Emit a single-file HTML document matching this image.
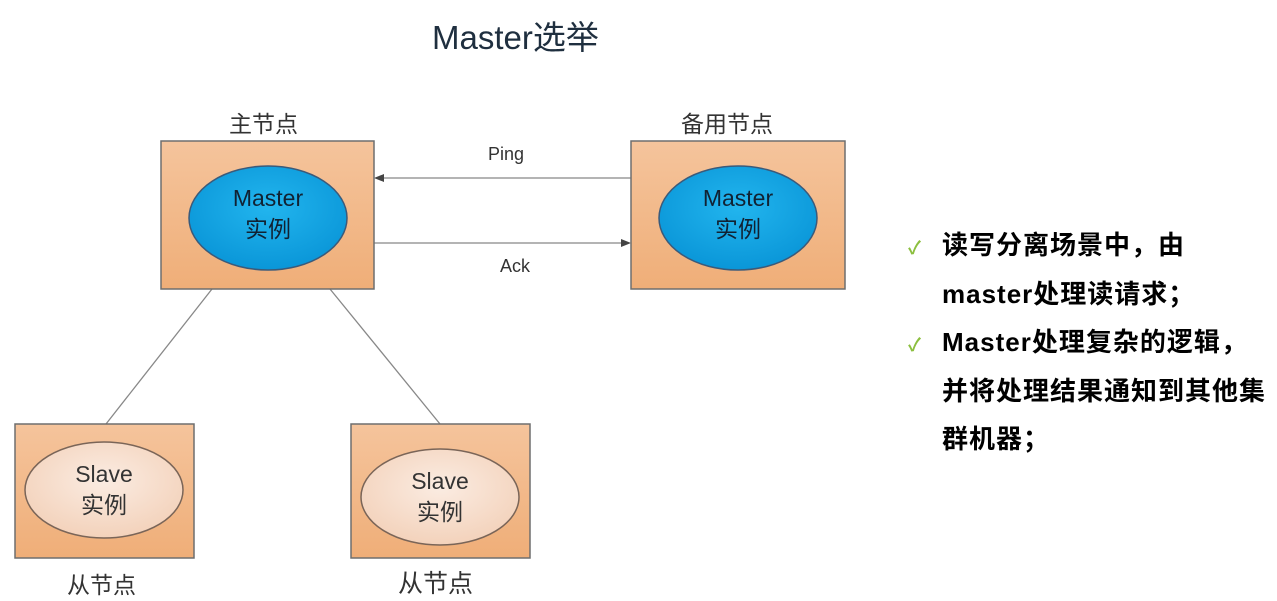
<!DOCTYPE html>
<html><head><meta charset="utf-8"><style>
html,body{margin:0;padding:0;background:#fff;}
body{width:1277px;height:601px;position:relative;overflow:hidden;font-family:"Liberation Sans","Noto Sans CJK SC",sans-serif;}
.t{position:absolute;white-space:nowrap;}
.r{position:absolute;left:942px;font-size:26px;font-weight:bold;color:#000;letter-spacing:1px;line-height:30px;}
.ck{position:absolute;left:908px;color:#8cbf3f;font-size:18px;font-weight:bold;}
.e{font-size:23px;line-height:31px;}
</style></head><body>
<svg width="1277" height="601" style="position:absolute;left:0;top:0">
<defs>
<linearGradient id="bx" x1="0" y1="0" x2="0" y2="1"><stop offset="0" stop-color="#f5c49c"/><stop offset="1" stop-color="#efae78"/></linearGradient>
<radialGradient id="bl" cx="0.5" cy="0.4" r="0.6"><stop offset="0" stop-color="#22b5ee"/><stop offset="1" stop-color="#0a96d8"/></radialGradient>
<radialGradient id="sl" cx="0.5" cy="0.4" r="0.6"><stop offset="0" stop-color="#fbece2"/><stop offset="1" stop-color="#f3d2bb"/></radialGradient>
</defs>
<g stroke="#888" stroke-width="1.3" fill="none">
<line x1="212" y1="289" x2="106" y2="424"/>
<line x1="330" y1="289" x2="440" y2="424"/>
<line x1="631" y1="178" x2="380" y2="178"/>
<line x1="374" y1="243" x2="625" y2="243"/>
</g>
<polygon points="374,178 384,174 384,182" fill="#444"/>
<polygon points="631,243 621,239 621,247" fill="#444"/>
<g stroke="#6e6e6e" stroke-width="1.5">
<rect x="161" y="141" width="213" height="148" fill="url(#bx)"/>
<rect x="631" y="141" width="214" height="148" fill="url(#bx)"/>
<rect x="15" y="424" width="179" height="134" fill="url(#bx)"/>
<rect x="351" y="424" width="179" height="134" fill="url(#bx)"/>
</g>
<g stroke="#3b5a7a" stroke-width="1.5">
<ellipse cx="268" cy="218" rx="79" ry="52" fill="url(#bl)"/>
<ellipse cx="738" cy="218" rx="79" ry="52" fill="url(#bl)"/>
</g>
<g stroke="#7a6558" stroke-width="1.5">
<ellipse cx="104" cy="490" rx="79" ry="48" fill="url(#sl)"/>
<ellipse cx="440" cy="497" rx="79" ry="48" fill="url(#sl)"/>
</g>
</svg>
<div class="t" style="left:432px;top:11px;font-size:33px;color:#1f2f3f;">Master选举</div>
<div class="t" style="left:229px;top:105px;font-size:23px;color:#333;">主节点</div>
<div class="t" style="left:681px;top:105px;font-size:23px;color:#333;">备用节点</div>
<div class="t" style="left:488px;top:144px;font-size:18px;color:#333;">Ping</div>
<div class="t" style="left:500px;top:256px;font-size:18px;color:#333;">Ack</div>
<div class="t e" style="left:218px;top:183px;width:100px;text-align:center;color:#123;">Master<br>实例</div>
<div class="t e" style="left:688px;top:183px;width:100px;text-align:center;color:#123;">Master<br>实例</div>
<div class="t e" style="left:54px;top:459px;width:100px;text-align:center;color:#333;">Slave<br>实例</div>
<div class="t e" style="left:390px;top:466px;width:100px;text-align:center;color:#333;">Slave<br>实例</div>
<div class="t" style="left:67px;top:566px;font-size:23px;color:#333;">从节点</div>
<div class="t" style="left:398px;top:564px;font-size:25px;color:#333;">从节点</div>
<div class="ck" style="top:234px;">✓</div>
<div class="ck" style="top:331px;">✓</div>
<div class="r" style="top:230px;">读写分离场景中，由</div>
<div class="r" style="top:279px;">master处理读请求；</div>
<div class="r" style="top:327px;">Master处理复杂的逻辑，</div>
<div class="r" style="top:376px;">并将处理结果通知到其他集</div>
<div class="r" style="top:424px;">群机器；</div>
</body></html>
